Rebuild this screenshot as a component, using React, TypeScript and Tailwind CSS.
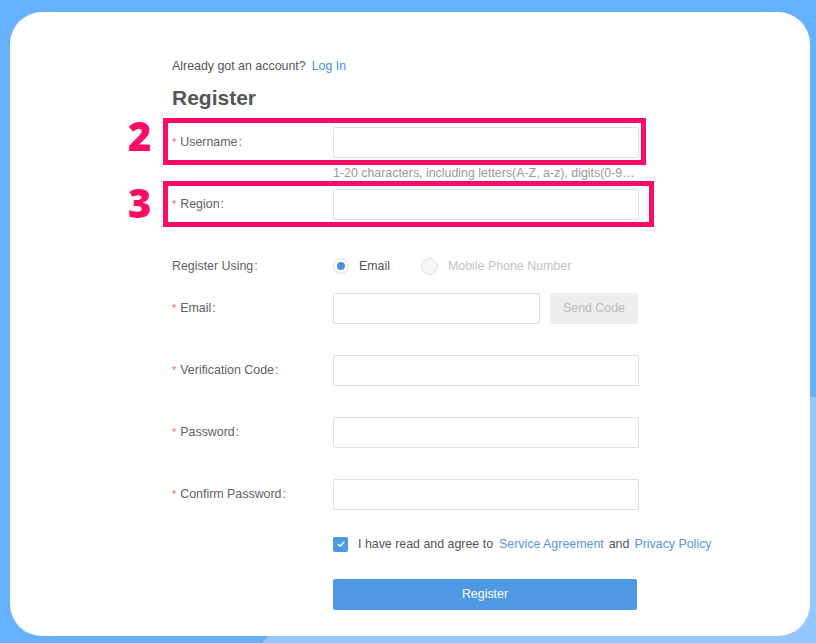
import React from "react";

const font = { fontFamily: '"Liberation Sans", Arial, sans-serif' };

function Label({ text, required = true }: { text: string; required?: boolean }) {
  return (
    <div className="w-[161px] shrink-0 flex items-center text-[12.4px] text-[#5f6266]">
      {required && <span className="text-[#f56c6c] mr-[4px] text-[11px]">*</span>}
      <span>{text}</span>
      <span className="ml-[1px]">:</span>
    </div>
  );
}

function Input({ w = "w-[306px]" }: { w?: string }) {
  return <div className={`${w} h-[31px] border border-[#dcdfe6] rounded-[2px] bg-white`} />;
}

function Row({ label, mt, children }: { label: string; mt: string; children?: React.ReactNode }) {
  return (
    <div className={`flex items-center h-[31px] ${mt}`}>
      <Label text={label} />
      {children ?? <Input />}
    </div>
  );
}

export default function App() {
  return (
    <div className="relative w-[816px] h-[643px] overflow-hidden bg-[#66b1ff] flex flex-col pt-[12px] pl-[10px] pr-[6px] pb-[7px]" style={font}>
      <div className="absolute left-[73px] top-[397px] w-[1480px] h-[1480px] rounded-full bg-[#94c6ff]" />
      <div className="relative z-10 flex-1 bg-white rounded-[32px] pl-[162px] pt-[46px] flex flex-col">
        <div className="h-[16px] leading-[16px] text-[12.4px] text-[#555] flex">
          <span>Already got an account?</span>
          <span className="ml-[6px] text-[#4a8fe3]">Log In</span>
        </div>
        <div className="mt-[12px] h-[24px] leading-[24px] text-[21px] font-bold text-[#555]">Register</div>

        <Row label="Username" mt="mt-[17px]" />
        <div className="mt-[7px] h-[16px] leading-[16px] ml-[161px] w-[302px] truncate text-[12.4px] text-[#999]">
          1-20 characters, including letters(A-Z, a-z), digits(0-9), underscores(_), and hyphens(-)
        </div>
        <Row label="Region" mt="mt-[8px]" />

        <div className="flex items-center h-[31px] mt-[31px]">
          <Label text="Register Using" required={false} />
          <div className="flex items-center text-[12.4px]">
            <span className="w-[16px] h-[16px] rounded-full border border-[#dcdfe6] flex items-center justify-center bg-white">
              <span className="w-[8px] h-[8px] rounded-full bg-[#4a8fe3]" />
            </span>
            <span className="ml-[10px] text-[#555]">Email</span>
            <span className="ml-[31px] w-[17px] h-[17px] rounded-full border border-[#dcdfe6] bg-[#f5f7fa]" />
            <span className="ml-[10px] text-[#c0c4cc]">Mobile Phone Number</span>
          </div>
        </div>

        <Row label="Email" mt="mt-[11px]">
          <div className="flex items-center">
            <Input w="w-[207px]" />
            <div className="ml-[10px] w-[88px] h-[31px] rounded-[2px] bg-[#ededed] flex items-center justify-center text-[12.4px] text-[#bcbcbc]">
              Send Code
            </div>
          </div>
        </Row>
        <Row label="Verification Code" mt="mt-[31px]" />
        <Row label="Password" mt="mt-[31px]" />
        <Row label="Confirm Password" mt="mt-[31px]" />

        <div className="mt-[26px] h-[16px] ml-[161px] flex items-center text-[12.4px]">
          <span className="w-[15px] h-[15px] rounded-[2px] bg-[#4f98e4] flex items-center justify-center">
            <svg width="10" height="10" viewBox="0 0 10 10" fill="none">
              <path d="M2 5.2 L4.2 7.2 L8 3" stroke="white" strokeWidth="1.3" strokeLinecap="round" strokeLinejoin="round" />
            </svg>
          </span>
          <span className="ml-[10px] text-[#555]">I have read and agree to</span>
          <span className="ml-[6px] text-[#5594e8]">Service Agreement</span>
          <span className="ml-[5px] text-[#555]">and</span>
          <span className="ml-[5px] text-[#5594e8]">Privacy Policy</span>
        </div>

        <div className="mt-[27px] ml-[161px] w-[304px] h-[31px] rounded-[2px] bg-[#4f98e4] flex items-center justify-center text-[12.4px] text-white">
          Register
        </div>

        <div className="absolute left-[153px] top-[106px] w-[483px] h-[47px] border-[5px] border-[#ff0a66]" />
        <div className="absolute left-[153px] top-[169px] w-[491px] h-[46px] border-[5px] border-[#ff0a66]" />
        <div className="absolute left-[118px] top-[104px] text-[40px] leading-[40px] font-extrabold text-[#ff0a66]" style={{ fontFamily: '"Open Sans", sans-serif' }}>2</div>
        <div className="absolute left-[118px] top-[171px] text-[40px] leading-[40px] font-extrabold text-[#ff0a66]" style={{ fontFamily: '"Open Sans", sans-serif' }}>3</div>
      </div>
    </div>
  );
}
